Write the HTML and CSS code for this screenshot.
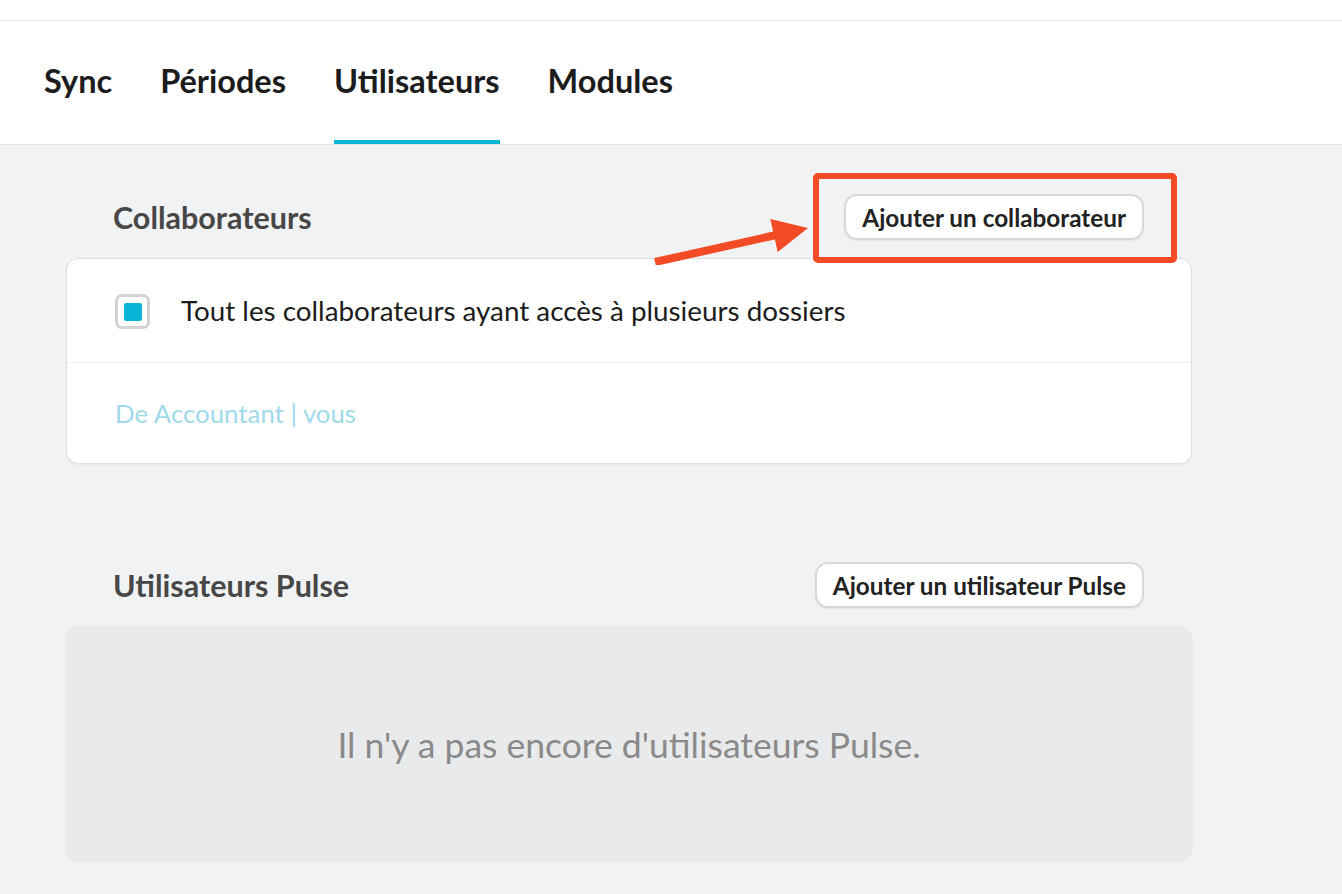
FILE: index.html
```html
<!DOCTYPE html>
<html lang="fr">
<head>
<meta charset="utf-8">
<title>Utilisateurs</title>
<link rel="stylesheet" href="styles.css">
</head>
<body>
<div class="topstrip"></div>
<nav class="tabs">
  <a class="tab">Sync</a>
  <a class="tab">Périodes</a>
  <a class="tab active">Utilisateurs</a>
  <a class="tab">Modules</a>
</nav>
<main class="content">
  <section class="section">
    <div class="section-head">
      <h2 class="section-title">Collaborateurs</h2>
      <svg class="arrow" width="160" height="50" viewBox="0 0 160 50" aria-hidden="true">
        <polygon points="4.1,43.1 123.1,16.6 120.3,3.9 158,13 127.7,37.1 124.9,24.4 5.9,50.9" fill="#f44b27"/>
      </svg>
      <div class="btn-wrap">
        <button class="btn">Ajouter un collaborateur</button>
        <span class="highlight"></span>
      </div>
    </div>
    <div class="card">
      <div class="card-row">
        <span class="checkbox"><span class="checkbox-fill"></span></span>
        <span class="row-text">Tout les collaborateurs ayant accès à plusieurs dossiers</span>
      </div>
      <div class="card-row sub">
        <span class="link-text">De Accountant | vous</span>
      </div>
    </div>
  </section>
  <section class="section second">
    <div class="section-head">
      <h2 class="section-title">Utilisateurs Pulse</h2>
      <button class="btn">Ajouter un utilisateur Pulse</button>
    </div>
    <div class="empty">Il n'y a pas encore d'utilisateurs Pulse.</div>
  </section>
</main>
</body>
</html>
```
FILE: styles.css
```css
* { box-sizing: border-box; }
html, body { margin: 0; padding: 0; }
body {
  background: #f1f2f4;
  font-family: Lato, "Open Sans", sans-serif;
  color: #1e1e1e;
  height: 894px;
  overflow: hidden;
}
.topstrip {
  height: 21px;
  background: #fff;
  border-bottom: 1px solid #ebebed;
}
.tabs {
  display: flex;
  gap: 48px;
  padding-left: 44px;
  height: 124px;
  background: #fff;
  border-bottom: 1px solid #e2e3e6;
}
.tab {
  display: flex;
  align-items: center;
  font-size: 32.5px;
  font-weight: 700;
  color: #1c1c1c;
  border-bottom: 4px solid transparent;
  height: 123px;
  padding-top: 0;
}
.tab.active { border-bottom-color: #0ab4d6; }
.content {
  width: 1126px;
  margin-left: 66px;
}
.section { padding-top: 49px; }
.section.second { padding-top: 98px; }
.section-head {
  position: relative;
  display: flex;
  align-items: center;
  justify-content: space-between;
  height: 46px;
  padding: 0 48px 0 47px;
  margin-bottom: 18px;
}
.section.second .section-head { margin-bottom: 17px; }
.section-title {
  margin: 0;
  font-size: 30.5px;
  font-weight: 700;
  color: #474747;
}
.btn {
  height: 46px;
  padding: 0 16px;
  background: #fff;
  border: 2px solid #d7d8da;
  border-radius: 13px;
  font-family: Lato, "Open Sans", sans-serif;
  font-size: 24.3px;
  font-weight: 700;
  color: #222;
  box-shadow: 0 1px 2px rgba(0,0,0,0.06);
  white-space: nowrap;
}
.btn-wrap { position: relative; display: flex; }
.highlight {
  position: absolute;
  top: -21px; left: -31px; right: -33px; bottom: -23px;
  border: 6px solid #f44a26;
  border-radius: 5px;
  pointer-events: none;
}
.arrow {
  position: absolute;
  left: 584px;
  top: 21px;
}
.card {
  background: #fff;
  border: 1px solid #dedfe1;
  border-radius: 12px;
  box-shadow: 0 1px 2px rgba(0,0,0,0.05);
}
.card-row {
  display: flex;
  align-items: center;
  height: 104px;
  padding-left: 48px;
  border-bottom: 1px solid #eeeff1;
}
.card-row.sub { height: 100px; border-bottom: none; }
.checkbox {
  width: 35px;
  height: 35px;
  border: 3px solid #d2d3d5;
  border-radius: 7px;
  display: flex;
  align-items: center;
  justify-content: center;
  margin-right: 31px;
  margin-top: 2px;
}
.checkbox-fill {
  width: 18px;
  height: 18px;
  background: #0ab4d6;
  border-radius: 2px;
}
.row-text {
  font-size: 27.8px;
  color: #1c1c1c;
}
.link-text {
  font-size: 25.8px;
  color: #9fdaea;
}
.empty {
  height: 238px;
  margin: 0 -1px;
  background: #e9eaec;
  border-radius: 16px;
  display: flex;
  align-items: center;
  justify-content: center;
  font-size: 35.5px;
  color: #8a8a8a;
}
```
